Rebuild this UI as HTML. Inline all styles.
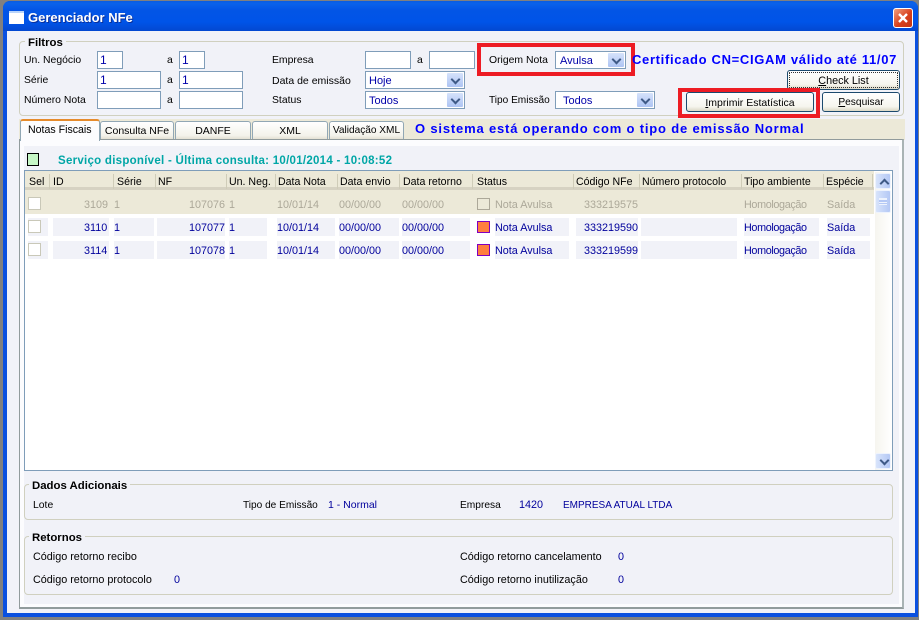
<!DOCTYPE html>
<html><head><meta charset="utf-8"><style>
html,body{margin:0;padding:0;width:919px;height:620px;overflow:hidden;background:#808080}
div,span{position:absolute;box-sizing:border-box;white-space:nowrap}
#r{left:0;top:0;width:919px;height:620px;overflow:hidden;font:11px/14px "Liberation Sans",sans-serif;color:#000}
.i{background:#fff;border:1px solid #7F9DB9;height:18px;color:#00a;padding-left:2px;font-size:12px;line-height:17px}
.c{background:#fff;border:1px solid #7F9DB9;height:18px;color:#00a;padding-left:3px;line-height:19px}
.b{position:absolute;right:1px;top:1px;width:16px;height:14px;background:linear-gradient(#d5e2fb,#aec4f3);border-radius:1px}
.b:after,.sb:after{content:"";position:absolute;left:5px;top:3px;width:5px;height:5px;border:solid #3f5a86;border-width:0 2px 2px 0;transform:rotate(45deg)}
.sb.up:after{top:6px;transform:rotate(225deg)}
.g{border:1px solid #D0D0BF;border-radius:4px}
.l{font-weight:bold;background:#F1F2F8;padding:0 3px;height:14px;font-size:11.4px;margin-top:1px}
.bt{height:20px;border:1px solid #1c4a6e;border-radius:3px;background:linear-gradient(#fff,#f6f5ee 75%,#dcd8c6);text-align:center;line-height:20px;font-size:10.5px}
.tab{top:121px;height:18px;border:1px solid #91A7B4;border-bottom:0;border-radius:3px 3px 0 0;background:linear-gradient(#fff,#f3f2ea 80%,#e4e1d3);text-align:center;line-height:18px;font-size:10.5px}
.cb{left:28px;width:13px;height:13px;background:#fff;border:1px solid #c9c8b8}
.p{background:#F1F2F8;height:18px}
.h{top:175px;color:#000;font-size:10.6px}
.sp{top:174px;width:1px;height:15px;background:#cfccb8}
.u{color:#00009c;font-size:10.8px;margin-top:1px}.y{color:#aca899;font-size:10.8px;margin-top:1px}
.ho{letter-spacing:-.36px}
.w{font-size:10.4px;margin-top:1px}
.rt{font-size:10.8px;margin-top:1px}
.bl{font-weight:bold;color:#0000ff;font-size:13px;letter-spacing:.67px;margin-top:1px}
.sw{left:477px;width:13px;height:12px;margin-top:1px;background:#ff7f3f;border:1px solid #8000c0}
.sb{position:absolute;left:875px;width:16px;background:linear-gradient(90deg,#d8e4fb,#b4c8f5);border:1px solid #eef3fd;border-radius:2px}
</style></head><body><div id="r">
<!-- frame -->
<div style="left:3px;top:1px;width:915px;height:616px;background:#0a50e0;border-radius:7px 7px 0 0"></div>
<div style="left:3px;top:1px;width:915px;height:30px;border-radius:7px 7px 0 0;background:linear-gradient(#0a5ce0 0,#0a62ea 8%,#0355e6 30%,#0054e8 70%,#0348d0 100%)"></div>
<div style="left:7px;top:31px;width:908px;height:582px;background:#F1F2F8"></div>
<div style="left:9px;top:11px;width:15px;height:13px;background:#fff;border-top:2px solid #b9d4fa"></div>
<div style="left:28px;top:10px;color:#fff;font-weight:bold;font-size:13px;line-height:16px;text-shadow:1px 1px 0 #0a2f9a">Gerenciador NFe</div>
<div style="left:893px;top:8px;width:20px;height:20px;background:linear-gradient(135deg,#f0a080,#d8401c 55%,#c23412);border:1px solid #fff;border-radius:3px"></div>
<svg style="position:absolute;left:893px;top:8px" width="20" height="20"><path d="M6 6L14 14M14 6L6 14" stroke="#fff" stroke-width="2.4"/></svg>

<!-- Filtros -->
<div class="g" style="left:19px;top:41px;width:885px;height:75px"></div>
<div class="l" style="left:25px;top:35px">Filtros</div>
<div class="w" style="left:24px;top:53px">Un. Negócio</div>
<div class="w" style="left:24px;top:73px">Série</div>
<div class="w" style="left:24px;top:93px">Número Nota</div>
<div class="w" style="left:167px;top:53px">a</div><div class="w" style="left:167px;top:73px">a</div><div class="w" style="left:167px;top:93px">a</div>
<div class="i" style="left:97px;top:51px;width:26px">1</div>
<div class="i" style="left:179px;top:51px;width:26px">1</div>
<div class="i" style="left:97px;top:71px;width:64px">1</div>
<div class="i" style="left:179px;top:71px;width:64px">1</div>
<div class="i" style="left:97px;top:91px;width:64px"></div>
<div class="i" style="left:179px;top:91px;width:64px"></div>
<div class="w" style="left:272px;top:53px">Empresa</div>
<div class="w" style="left:272px;top:73px;font-size:10.5px">Data de emissão</div>
<div class="w" style="left:272px;top:93px">Status</div>
<div class="i" style="left:365px;top:51px;width:46px"></div>
<div class="w" style="left:417px;top:53px">a</div>
<div class="i" style="left:429px;top:51px;width:46px"></div>
<div class="c" style="left:365px;top:71px;width:100px">Hoje<div class="b"></div></div>
<div class="c" style="left:365px;top:91px;width:100px">Todos<div class="b"></div></div>
<div class="w" style="left:489px;top:53px">Origem Nota</div>
<div class="c" style="left:555px;top:51px;width:71px;padding-left:4px">Avulsa<div class="b"></div></div>
<div class="w" style="left:489px;top:93px;font-size:10.1px">Tipo Emissão</div>
<div class="c" style="left:555px;top:91px;width:100px;padding-left:7px">Todos<div class="b"></div></div>
<div style="left:477px;top:43px;width:158px;height:33px;border:4px solid #ED1C24"></div>
<div class="bl" style="left:632px;top:52px;width:265px;height:16px;overflow:hidden">Certificado CN=CIGAM válido até 11/07</div>
<div class="bt" style="left:787px;top:70px;width:113px;outline:1px dotted #333;outline-offset:-3px;font-size:10.8px"><u>C</u>heck List</div>
<div class="bt" style="left:686px;top:92px;width:128px"><u>I</u>mprimir Estatística</div>
<div class="bt" style="left:822px;top:92px;width:78px;font-size:10.2px"><u>P</u>esquisar</div>
<div style="left:678px;top:88px;width:142px;height:30px;border:4px solid #ED1C24"></div>

<!-- tabs -->
<div style="left:19px;top:119px;width:886px;height:21px;background:#ECE9D8"></div>
<div style="left:19px;top:139px;width:885px;height:470px;background:#FCFCFE;border:1px solid #919B9C;border-bottom:2px solid #919B9C;border-right:2px solid #A9B3B4"></div>
<div style="left:24px;top:146px;width:875px;height:458px;background:#F1F2F8"></div>
<div style="left:20px;top:119px;width:80px;height:22px;background:#FCFCFE;border:1px solid #91A7B4;border-top:2px solid #E68B2C;border-bottom:0;border-radius:3px 3px 0 0;padding:1px 0 0 7px;line-height:16px;font-size:10.6px">Notas Fiscais</div>
<div class="tab" style="left:100px;width:74px">Consulta NFe</div>
<div class="tab" style="left:175px;width:76px">DANFE</div>
<div class="tab" style="left:252px;width:76px">XML</div>
<div class="tab" style="left:329px;width:75px;font-size:10.1px">Validação XML</div>
<div class="bl" style="left:415px;top:121px;letter-spacing:.82px">O sistema está operando com o tipo de emissão Normal</div>
<div style="left:27px;top:153px;width:12px;height:13px;background:#C6F7C6;border:1px solid #000"></div>
<div style="left:58px;top:154px;color:#00A6A6;font-weight:bold;font-size:11.5px;letter-spacing:.27px">Serviço disponível - Última consulta: 10/01/2014 - 10:08:52</div>

<!-- grid -->
<div style="left:24px;top:170px;width:869px;height:301px;background:#fff;border:1px solid #7F9DB9"></div>
<div style="left:25px;top:171px;width:849px;height:19px;background:#ECE9D8;border-bottom:3px solid #D6D2C2"></div>
<div style="left:25px;top:190px;width:849px;height:24px;background:#ECE9D8"></div>
<div class="h" style="left:29px">Sel</div><div class="h" style="left:53px">ID</div><div class="h" style="left:117px">Série</div><div class="h" style="left:158px">NF</div><div class="h" style="left:229px">Un. Neg.</div><div class="h" style="left:278px">Data Nota</div><div class="h" style="left:340px">Data envio</div><div class="h" style="left:403px">Data retorno</div><div class="h" style="left:477px">Status</div><div class="h" style="left:576px">Código NFe</div><div class="h" style="left:642px">Número protocolo</div><div class="h" style="left:744px">Tipo ambiente</div><div class="h" style="left:826px">Espécie</div>
<div class="sp" style="left:49px"></div><div class="sp" style="left:113px"></div><div class="sp" style="left:155px"></div><div class="sp" style="left:226px"></div><div class="sp" style="left:275px"></div><div class="sp" style="left:337px"></div><div class="sp" style="left:399px"></div><div class="sp" style="left:472px"></div><div class="sp" style="left:573px"></div><div class="sp" style="left:639px"></div><div class="sp" style="left:741px"></div><div class="sp" style="left:823px"></div><div class="sp" style="left:872px"></div>

<!-- row backgrounds -->
<div class="p" style="left:28px;top:218px;width:20px"></div><div class="p" style="left:53px;top:218px;width:56px"></div><div class="p" style="left:114px;top:218px;width:40px"></div><div class="p" style="left:157px;top:218px;width:68px"></div><div class="p" style="left:229px;top:218px;width:38px"></div><div class="p" style="left:277px;top:218px;width:58px"></div><div class="p" style="left:339px;top:218px;width:60px"></div><div class="p" style="left:402px;top:218px;width:68px"></div><div class="p" style="left:495px;top:218px;width:74px"></div><div class="p" style="left:576px;top:218px;width:62px"></div><div class="p" style="left:641px;top:218px;width:96px"></div><div class="p" style="left:744px;top:218px;width:75px"></div><div class="p" style="left:827px;top:218px;width:43px"></div>
<div class="p" style="left:28px;top:241px;width:20px"></div><div class="p" style="left:53px;top:241px;width:56px"></div><div class="p" style="left:114px;top:241px;width:40px"></div><div class="p" style="left:157px;top:241px;width:68px"></div><div class="p" style="left:229px;top:241px;width:38px"></div><div class="p" style="left:277px;top:241px;width:58px"></div><div class="p" style="left:339px;top:241px;width:60px"></div><div class="p" style="left:402px;top:241px;width:68px"></div><div class="p" style="left:495px;top:241px;width:74px"></div><div class="p" style="left:576px;top:241px;width:62px"></div><div class="p" style="left:641px;top:241px;width:96px"></div><div class="p" style="left:744px;top:241px;width:75px"></div><div class="p" style="left:827px;top:241px;width:43px"></div>

<!-- row 1 -->
<div class="cb" style="top:197px"></div>
<div class="cb" style="top:220px"></div>
<div class="cb" style="top:243px"></div>
<div class="y" style="left:84px;top:197px">3109</div><div class="y" style="left:114px;top:197px">1</div><div class="y" style="left:189px;top:197px">107076</div><div class="y" style="left:229px;top:197px">1</div><div class="y" style="left:277px;top:197px">10/01/14</div><div class="y" style="left:339px;top:197px">00/00/00</div><div class="y" style="left:402px;top:197px">00/00/00</div><div style="left:477px;top:198px;width:13px;height:12px;border:1px solid #aca899"></div><div class="y" style="left:495px;top:197px">Nota Avulsa</div><div class="y" style="left:584px;top:197px">333219575</div><div class="y ho" style="left:744px;top:197px">Homologação</div><div class="y" style="left:827px;top:197px">Saída</div>
<!-- row 2 -->
<div class="u" style="left:84px;top:220px">3110</div><div class="u" style="left:114px;top:220px">1</div><div class="u" style="left:189px;top:220px">107077</div><div class="u" style="left:229px;top:220px">1</div><div class="u" style="left:277px;top:220px">10/01/14</div><div class="u" style="left:339px;top:220px">00/00/00</div><div class="u" style="left:402px;top:220px">00/00/00</div><div class="sw" style="top:220px"></div><div class="u" style="left:495px;top:220px">Nota Avulsa</div><div class="u" style="left:584px;top:220px">333219590</div><div class="u ho" style="left:744px;top:220px">Homologação</div><div class="u" style="left:827px;top:220px">Saída</div>
<!-- row 3 -->
<div class="u" style="left:84px;top:243px">3114</div><div class="u" style="left:114px;top:243px">1</div><div class="u" style="left:189px;top:243px">107078</div><div class="u" style="left:229px;top:243px">1</div><div class="u" style="left:277px;top:243px">10/01/14</div><div class="u" style="left:339px;top:243px">00/00/00</div><div class="u" style="left:402px;top:243px">00/00/00</div><div class="sw" style="top:243px"></div><div class="u" style="left:495px;top:243px">Nota Avulsa</div><div class="u" style="left:584px;top:243px">333219599</div><div class="u ho" style="left:744px;top:243px">Homologação</div><div class="u" style="left:827px;top:243px">Saída</div>

<!-- scrollbar -->
<div style="left:875px;top:172px;width:17px;height:298px;background:linear-gradient(90deg,#f6f5ef,#fff)"></div>
<div class="sb up" style="top:173px;height:16px"></div>
<div style="left:875px;top:190px;width:16px;height:23px;background:linear-gradient(90deg,#d8e4fb,#b4c8f5);border:1px solid #eef3fd;border-radius:2px"></div>
<div style="left:879px;top:198px;width:8px;height:7px;border-top:1px solid #eef3fd;border-bottom:1px solid #eef3fd;background:linear-gradient(#eef3fd 1px,#b4c8f5 1px,#b4c8f5 3px,#eef3fd 3px,#eef3fd 4px,#b4c8f5 4px)"></div>
<div class="sb" style="top:453px;height:16px"></div>

<!-- Dados -->
<div class="g" style="left:24px;top:484px;width:869px;height:36px"></div>
<div class="l" style="left:29px;top:478px">Dados Adicionais</div>
<div class="w" style="left:33px;top:498px">Lote</div>
<div class="w" style="left:243px;top:498px;font-size:10.1px">Tipo de Emissão</div>
<div class="u" style="left:328px;top:497px;font-size:10.5px">1 - Normal</div>
<div class="w" style="left:460px;top:498px;font-size:10.2px">Empresa</div>
<div class="u" style="left:519px;top:497px">1420</div>
<div class="u" style="left:563px;top:498px;font-size:10px">EMPRESA ATUAL LTDA</div>
<!-- Retornos -->
<div class="g" style="left:24px;top:536px;width:869px;height:59px"></div>
<div class="l" style="left:29px;top:530px">Retornos</div>
<div class="rt" style="left:33px;top:549px">Código retorno recibo</div>
<div class="rt" style="left:33px;top:572px">Código retorno protocolo</div>
<div class="u" style="left:174px;top:572px">0</div>
<div class="rt" style="left:460px;top:549px">Código retorno cancelamento</div>
<div class="u" style="left:618px;top:549px">0</div>
<div class="rt" style="left:460px;top:572px">Código retorno inutilização</div>
<div class="u" style="left:618px;top:572px">0</div>
</div></body></html>
